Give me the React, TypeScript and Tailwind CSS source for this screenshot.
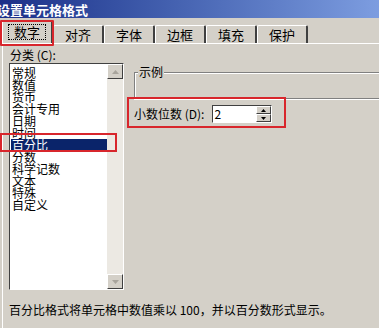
import React from "react";

const items = ["常规", "数值", "货币", "会计专用", "日期", "时间", "百分比", "分数", "科学记数", "文本", "特殊", "自定义"];
const tabs = ["对齐", "字体", "边框", "填充", "保护"];

const Arrow = ({ up }: { up?: boolean }) => (
	<svg width="7" height="4" viewBox="0 0 7 4">
		<path d={up ? "M0 4 L3.5 0 L7 4 Z" : "M0 0 L3.5 4 L7 0 Z"} fill="#a8a49c" />
	</svg>
);

const SpinArrow = ({ up }: { up?: boolean }) => (
	<svg width="5" height="3" viewBox="0 0 5 3">
		<path d={up ? "M0 3 L2.5 0 L5 3 Z" : "M0 0 L2.5 3 L5 0 Z"} fill="#000" />
	</svg>
);

const App: React.FC = () => {
	return (
		<div
			className="relative w-[379px] h-[328px] overflow-hidden bg-[#d4d0c8] text-black"
			style={{ fontFamily: '"Noto Sans CJK SC", "Noto Sans", sans-serif' }}
		>
			{/* title bar */}
			<div className="h-[18px] bg-gradient-to-r from-[#1c2f88] to-[#7d9de0] flex items-center">
				<span className="-ml-[3px] text-white font-bold text-[13px] leading-none">设置单元格格式</span>
			</div>

			{/* tabs */}
			<div className="flex items-end h-[25px] pl-[2px]">
				<div className="h-[23px] w-[51px] border-t border-l border-white border-r-2 border-r-[#404040] rounded-t-[2px] flex items-center justify-center">
					<span className="border border-dotted border-black px-[5px] text-[13px] leading-[14px]">数字</span>
				</div>
				{tabs.map((t) => (
					<div
						key={t}
						className="h-[18px] w-[51px] border-t border-l border-white border-r-2 border-r-[#404040] rounded-t-[2px] flex items-center justify-center text-[13px] leading-none"
					>
						{t}
					</div>
				))}
			</div>

			{/* panel */}
			<div className="ml-[2px] border-t border-l border-white h-[285px] flex flex-col">
				<div className="flex pl-[6px]">
					{/* left column */}
					<div className="w-[115px] flex flex-col">
						<div className="mt-[4px] h-[13px] text-[12px] leading-[13px] pl-[1px]">分类 (C):</div>
						<div className="mt-[2px] h-[227px] flex border-t border-l border-t-[#404040] border-l-[#404040] border-b border-r border-b-white border-r-white bg-white">
							<div className="flex-1 pt-[3px] pl-[1px]">
								{items.map((it) => (
									<div
										key={it}
										className={
											"h-[12px] text-[12px] leading-[12px] pl-[1px] whitespace-nowrap " +
											(it === "百分比" ? "bg-[#0a246a] text-white" : "")
										}
									>
										{it}
									</div>
								))}
							</div>
							<div className="w-[16px] bg-[#ece9e3] flex flex-col justify-between">
								<div className="h-[15px] bg-[#d4d0c8] border border-t-white border-l-white border-b-[#404040] border-r-[#404040] flex items-center justify-center">
									<Arrow up />
								</div>
								<div className="h-[15px] bg-[#d4d0c8] border border-t-white border-l-white border-b-[#404040] border-r-[#404040] flex items-center justify-center">
									<Arrow />
								</div>
							</div>
						</div>
					</div>

					{/* right column */}
					<div className="ml-[10px] flex-1 flex flex-col">
						<div className="relative mt-[28px] h-[27px] border-t border-l border-b border-t-[#808080] border-l-[#808080] border-b-[#808080] shadow-[inset_1px_1px_0_#fff,0_1px_0_#fff]">
							<span className="absolute -top-[8px] left-[3px] bg-[#d4d0c8] px-[1px] text-[12px] leading-[14px]">示例</span>
						</div>
						<div className="mt-[6px] flex items-center">
							<span className="text-[12px] leading-none">小数位数 (D):</span>
							<div className="ml-[8px] w-[60px] h-[18px] bg-white border border-t-[#404040] border-l-[#404040] border-b-white border-r-white flex items-center">
								<span className="flex-1 pl-[1px] text-[12px] leading-none">2</span>
								<div className="w-[15px] h-full flex flex-col">
									<div className="flex-1 bg-[#d4d0c8] border border-t-white border-l-white border-b-[#404040] border-r-[#404040] flex items-center justify-center">
										<SpinArrow up />
									</div>
									<div className="flex-1 bg-[#d4d0c8] border border-t-white border-l-white border-b-[#404040] border-r-[#404040] flex items-center justify-center">
										<SpinArrow />
									</div>
								</div>
							</div>
						</div>
					</div>
				</div>

				<div className="mt-[13px] pl-[6px] text-[12px] leading-[13px] whitespace-nowrap">
					百分比格式将单元格中数值乘以 100，并以百分数形式显示。
				</div>
			</div>

			{/* red annotation boxes */}
			<div className="absolute left-0 top-[20px] w-[54px] h-[26px] border-2 border-[#d8262c] rounded-[1px]" />
			<div className="absolute left-0 top-[133px] w-[117px] h-[19px] border-2 border-[#d8262c]" />
			<div className="absolute left-[127px] top-[97px] w-[159px] h-[31px] border-2 border-[#d8262c]" />
		</div>
	);
};

export default App;
